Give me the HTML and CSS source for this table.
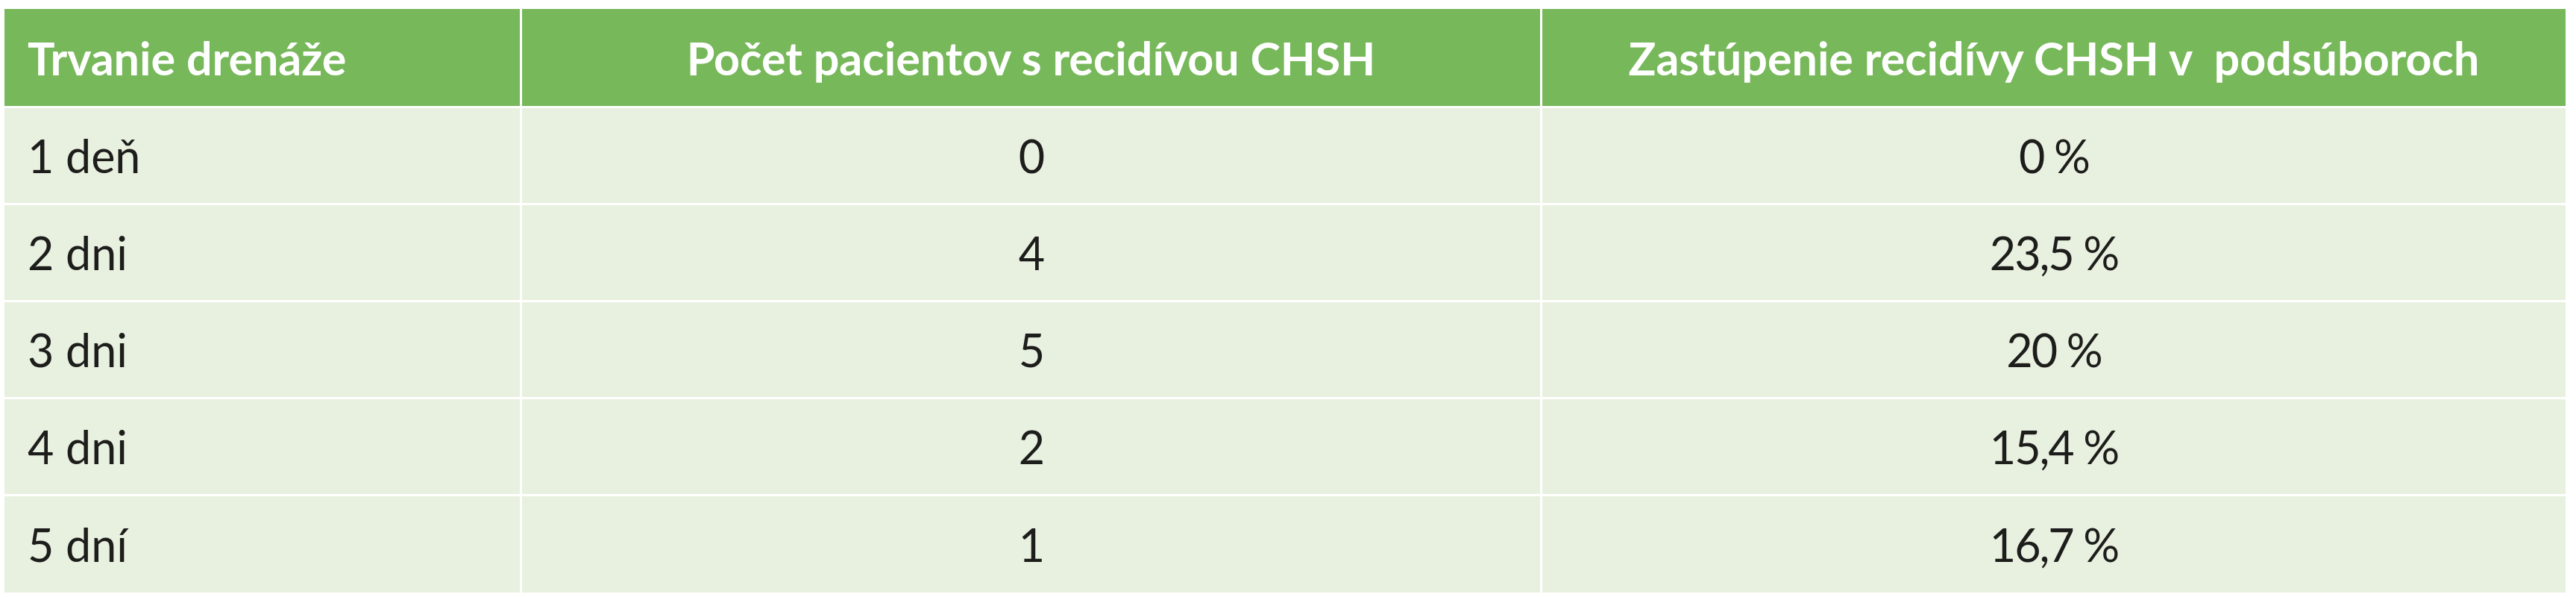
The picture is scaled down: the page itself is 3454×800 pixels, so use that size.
FILE: index.html
```html
<!DOCTYPE html>
<html lang="sk">
<head>
<meta charset="utf-8">
<title>Recidíva CHSH podľa trvania drenáže</title>
<link rel="stylesheet" href="styles.css">
</head>
<body>
<table class="data-table">
  <colgroup>
    <col class="col-duration">
    <col class="col-count">
    <col class="col-share">
  </colgroup>
  <thead>
    <tr>
      <th class="cell-left">Trvanie drenáže</th>
      <th>Počet pacientov s recidívou CHSH</th>
      <th>Zastúpenie recidívy CHSH v&nbsp; podsúboroch</th>
    </tr>
  </thead>
  <tbody>
    <tr><td class="cell-left">1 deň</td><td class="num">0</td><td class="num">0 %</td></tr>
    <tr><td class="cell-left">2 dni</td><td class="num">4</td><td class="num">23,5 %</td></tr>
    <tr><td class="cell-left">3 dni</td><td class="num">5</td><td class="num">20 %</td></tr>
    <tr><td class="cell-left">4 dni</td><td class="num">2</td><td class="num">15,4 %</td></tr>
    <tr class="row-last"><td class="cell-left">5 dní</td><td class="num">1</td><td class="num">16,7 %</td></tr>
  </tbody>
</table>
</body>
</html>
```

FILE: styles.css
```css
html, body {
  margin: 0;
  padding: 0;
  background: #ffffff;
}

body {
  font-family: Lato, "Open Sans", "Liberation Sans", sans-serif;
}

.data-table {
  table-layout: fixed;
  width: 3440px;
  margin: 9px 0 0 3px;
  border-collapse: separate;
  border-spacing: 3px;
}

.col-duration { width: 691px; }
.col-count { width: 1365px; }
.col-share { width: 1372px; }

.data-table th,
.data-table td {
  padding: 0 31px;
  text-align: center;
  vertical-align: middle;
  white-space: nowrap;
  font-size: 61px;
  line-height: 1;
}

.data-table th {
  height: 130px;
  background: #77b85a;
  color: #ffffff;
  font-weight: 700;
}

.data-table td {
  height: 127px;
  background: #e8f1e0;
  color: #1d1d1b;
  font-weight: 400;
}

.data-table .row-last td {
  height: 129px;
}

.data-table .cell-left {
  text-align: left;
}

.data-table .num {
  letter-spacing: -2px;
}
```
